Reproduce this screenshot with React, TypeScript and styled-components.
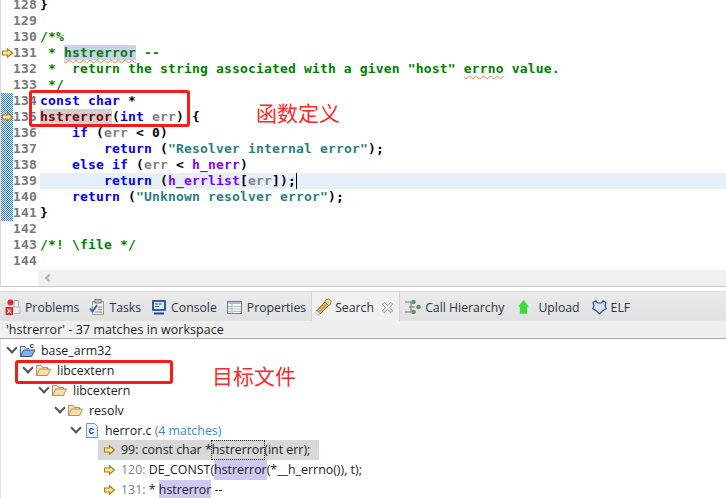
import React from 'react';
import styled, { createGlobalStyle } from 'styled-components';

const GlobalStyle = createGlobalStyle`
    html, body {
        margin: 0;
        padding: 0;
        background: #fff;
    }
`;

type Kind = 'plain' | 'kw' | 'cm' | 'str' | 'param' | 'glob' | 'def' | 'occ' | 'squig';
type Tok = [Kind, string];

const kindColor: Record<Kind, string> = {
    plain: '#000',
    kw: '#0000f0',
    cm: '#008000',
    str: '#2a7f7f',
    param: '#808080',
    glob: '#7f00ff',
    def: '#7f0000',
    occ: '#008000',
    squig: '#008000',
};

const codeLines: { n: number; toks: Tok[]; mark?: boolean; current?: boolean }[] = [
    { n: 128, toks: [['plain', '}']] },
    { n: 129, toks: [] },
    { n: 130, toks: [['cm', '/*%']] },
    { n: 131, mark: true, toks: [['cm', ' * '], ['occ', 'hstrerror'], ['cm', ' --']] },
    { n: 132, toks: [['cm', ' *  return the string associated with a given "host" '], ['squig', 'errno'], ['cm', ' value.']] },
    { n: 133, toks: [['cm', ' */']] },
    { n: 134, toks: [['kw', 'const'], ['plain', ' '], ['kw', 'char'], ['plain', ' *']] },
    { n: 135, mark: true, toks: [['def', 'hstrerror'], ['plain', '('], ['kw', 'int'], ['plain', ' '], ['param', 'err'], ['plain', ') {']] },
    { n: 136, toks: [['plain', '    '], ['kw', 'if'], ['plain', ' ('], ['param', 'err'], ['plain', ' < 0)']] },
    { n: 137, toks: [['plain', '        '], ['kw', 'return'], ['plain', ' ('], ['str', '"Resolver internal error"'], ['plain', ');']] },
    { n: 138, toks: [['plain', '    '], ['kw', 'else'], ['plain', ' '], ['kw', 'if'], ['plain', ' ('], ['param', 'err'], ['plain', ' < '], ['glob', 'h_nerr'], ['plain', ')']] },
    { n: 139, current: true, toks: [['plain', '        '], ['kw', 'return'], ['plain', ' ('], ['glob', 'h_errlist'], ['plain', '['], ['param', 'err'], ['plain', ']);']] },
    { n: 140, toks: [['plain', '    '], ['kw', 'return'], ['plain', ' ('], ['str', '"Unknown resolver error"'], ['plain', ');']] },
    { n: 141, toks: [['plain', '}']] },
    { n: 142, toks: [] },
    { n: 143, toks: [['cm', '/*! \\file */']] },
    { n: 144, toks: [] },
];

const hatch =
    "url(\"data:image/svg+xml,%3Csvg xmlns='http://www.w3.org/2000/svg' width='2' height='2' shape-rendering='crispEdges'%3E%3Crect width='2' height='2' fill='%23fff'/%3E%3Crect width='1' height='1' fill='%231878e8'/%3E%3Crect x='1' y='1' width='1' height='1' fill='%231878e8'/%3E%3C/svg%3E\")";

const ArrowMark = () => (
    <svg width="11" height="10" viewBox="0 0 11 10">
        <path d="M0.5 3H5.5V0.8L10.3 5L5.5 9.2V7H0.5Z" fill="#fdeaa0" stroke="#b07c12" strokeWidth="1.2" />
    </svg>
);

const ProblemsIcon = () => (
    <svg width="16" height="18" viewBox="0 0 16 18">
        <path d="M9 2.5H13.5V13H9Z" fill="#f4f6fa" stroke="#9aa4b4" />
        <path d="M9 9H15V15.5H9" fill="#e8ecf4" stroke="#b0b8c8" />
        <circle cx="5.5" cy="4.5" r="3" fill="#e02c2c" />
        <rect x="0.5" y="9" width="7.5" height="8" fill="#d03434" />
        <path d="M2.5 11L6 15M6 11L2.5 15" stroke="#fff" strokeWidth="1.1" />
    </svg>
);

const TasksIcon = () => (
    <svg width="16" height="16" viewBox="0 0 16 16">
        <rect x="3.5" y="2.5" width="11" height="13" fill="#f6f0e2" stroke="#ab9a76" />
        <rect x="6" y="0.5" width="6" height="3.5" fill="#c0c2d0" stroke="#7c7e90" />
        <path d="M1 9.5L3.6 12.5L8 6" fill="none" stroke="#1c5ed0" strokeWidth="1.8" />
        <path d="M9 8H13M9 10.5H13M6 13H13" stroke="#6b8fc4" />
    </svg>
);

const ConsoleIcon = () => (
    <svg width="16" height="16" viewBox="0 0 16 16">
        <rect x="1" y="1" width="14" height="11" rx="1" fill="#2c5e9e" />
        <rect x="3" y="3" width="10" height="7" fill="#e4edf8" />
        <path d="M4 5H11M4 7.5H8" stroke="#2c5e9e" />
        <path d="M3 14.5H13" stroke="#1f4880" strokeWidth="2" />
    </svg>
);

const PropertiesIcon = () => (
    <svg width="16" height="15" viewBox="0 0 16 15">
        <rect x="0.5" y="1.5" width="14" height="12" fill="#f8f8f8" stroke="#6c7f92" />
        <rect x="1" y="2" width="13" height="2" fill="#aebfd0" />
        <path d="M5 4V13M1 6.5H14M1 9H14M1 11.5H14" stroke="#b4c0cc" />
    </svg>
);

const SearchIcon = () => (
    <svg width="17" height="18" viewBox="0 0 17 18">
        <path d="M1.5 13L10 4L13.5 7.5L5 16Z" fill="#d8a860" stroke="#8a6a3a" />
        <path d="M1.5 13L5 16L3 17L0.5 15Z" fill="#fffdf0" stroke="#c8bc98" />
        <path d="M10 2.5L13.5 0.8L16.3 3.5L14.8 7.2L13.5 7.5L10 4Z" fill="#f1d98a" stroke="#98824e" />
    </svg>
);

const CloseIcon = () => (
    <svg width="11" height="11" viewBox="0 0 11 11">
        <path d="M0.5 2L2 0.5L5.5 3.5L9 0.5L10.5 2L7.5 5.5L10.5 9L9 10.5L5.5 7.5L2 10.5L0.5 9L3.5 5.5Z" fill="#fff" stroke="#8a8a8a" />
    </svg>
);

const HierarchyIcon = () => (
    <svg width="16" height="16" viewBox="0 0 16 16">
        <path d="M0 3H6M0 13H6M4 8H10M6 3V13" stroke="#777" fill="none" />
        <circle cx="8.5" cy="3" r="2.3" fill="#549a5c" />
        <circle cx="13.5" cy="8" r="2.3" fill="#549a5c" />
        <circle cx="8.5" cy="13" r="2.3" fill="#549a5c" />
    </svg>
);

const UploadIcon = () => (
    <svg width="20" height="14" viewBox="-4 0 20 14">
        <path d="M5.5 0L10.5 6.5H9V13.5H2V6.5H0.5Z" fill="#38dc3c" stroke="#5ccc5c" strokeWidth="0.4" />
    </svg>
);

const ElfIcon = () => (
    <svg width="17" height="15" viewBox="-2 0 17 15">
        <path d="M1 2.5L4 0.8L5.5 3H9.5L11 0.8L14 2.5L13 6L14.3 8.5L10.5 11L7.5 14L4.5 11L0.7 8.5L2 6Z" fill="#d9e2f2" stroke="#2e4f8f" strokeWidth="1.2" />
    </svg>
);

const FolderIcon = () => (
    <svg width="16" height="14" viewBox="0 0 16 14">
        <path d="M1.5 12.5V2.5H6L7.5 4.5H12.5V6" fill="#f5e6c4" stroke="#b28f5a" />
        <path d="M1.5 12.5L4.5 6H15.5L12.5 12.5Z" fill="#f8dfa8" stroke="#b28f5a" />
    </svg>
);

const ProjectIcon = () => (
    <svg width="17" height="16" viewBox="0 0 17 16">
        <path d="M1.5 14.5V4.5H6L7.5 6.5H10" fill="#dce8f6" stroke="#3a5f98" />
        <path d="M1.5 14.5L4.5 8H16L12.5 14.5Z" fill="#7fb0e6" stroke="#2f568f" />
        <text x="10.5" y="6" fontFamily="Liberation Sans, sans-serif" fontSize="8" fontWeight="700" fill="#2a3a60">c</text>
    </svg>
);

const CFileIcon = () => (
    <svg width="12" height="15" viewBox="0 0 12 15">
        <path d="M0.5 0.5H8.5L11.5 3.5V14.5H0.5Z" fill="#eef4fb" stroke="#7f93ac" />
        <text x="2.5" y="11" fontFamily="Liberation Sans, sans-serif" fontSize="10" fontWeight="700" fill="#1e5aa8">c</text>
    </svg>
);

const tabs = [
    { label: 'Problems', icon: <ProblemsIcon /> },
    { label: 'Tasks', icon: <TasksIcon /> },
    { label: 'Console', icon: <ConsoleIcon /> },
    { label: 'Properties', icon: <PropertiesIcon /> },
];

const tabsAfter = [
    { label: 'Call Hierarchy', icon: <HierarchyIcon /> },
    { label: 'Upload', icon: <UploadIcon /> },
    { label: 'ELF', icon: <ElfIcon /> },
];

const App = () => {
    return (
        <Page>
            <GlobalStyle />
            <Editor>
                <CodeArea>
                    {codeLines.map((line) => (
                        <CodeRow key={line.n}>
                            <Overview $changed={line.n >= 134 && line.n <= 141}>
                                {line.mark && <ArrowMark />}
                            </Overview>
                            <LineNumber>{line.n}</LineNumber>
                            <CodeText $current={line.current}>
                                {line.toks.map(([kind, text], i) => (
                                    <Token key={i} $kind={kind}>{text}</Token>
                                ))}
                                {line.current && <Caret />}
                            </CodeText>
                        </CodeRow>
                    ))}
                </CodeArea>
                <HScroll>
                    <ScrollArrow />
                </HScroll>
            </Editor>

            <Panel>
                <TabBar>
                    {tabs.map((t) => (
                        <Tab key={t.label}>{t.icon}{t.label}</Tab>
                    ))}
                    <ActiveTab>
                        <SearchIcon />Search<CloseSlot><CloseIcon /></CloseSlot>
                    </ActiveTab>
                    {tabsAfter.map((t) => (
                        <Tab key={t.label}>{t.icon}{t.label}</Tab>
                    ))}
                </TabBar>
                <StatusRow>'hstrerror' - 37 matches in workspace</StatusRow>
                <Tree>
                    <TreeRow $level={0}><Chevron /><IconSlot><ProjectIcon /></IconSlot><span>base_arm32</span></TreeRow>
                    <TreeRow $level={1}><Chevron /><IconSlot><FolderIcon /></IconSlot><span>libcextern</span></TreeRow>
                    <TreeRow $level={2}><Chevron /><IconSlot><FolderIcon /></IconSlot><span>libcextern</span></TreeRow>
                    <TreeRow $level={3}><Chevron /><IconSlot><FolderIcon /></IconSlot><span>resolv</span></TreeRow>
                    <TreeRow $level={4}>
                        <Chevron /><IconSlot $inset={3}><CFileIcon /></IconSlot>
                        <span>herror.c <MatchCount>(4 matches)</MatchCount></span>
                    </TreeRow>
                    <MatchRow $selected>
                        <ArrowMark />
                        <span><MatchLine $selected>99:</MatchLine> const char *<FocusWord>hstrerror</FocusWord>(int err);</span>
                    </MatchRow>
                    <MatchRow>
                        <ArrowMark />
                        <span><MatchLine>120:</MatchLine> DE_CONST(<Hit>hstrerror</Hit>(*__h_errno()), t);</span>
                    </MatchRow>
                    <MatchRow>
                        <ArrowMark />
                        <span><MatchLine>131:</MatchLine> * <Hit>hstrerror</Hit> --</span>
                    </MatchRow>
                </Tree>
            </Panel>

            <DefinitionBox />
            <DefinitionLabel>函数定义</DefinitionLabel>
            <TargetBox />
            <TargetLabel>目标文件</TargetLabel>
        </Page>
    );
};

export default App;

const Page = styled.div`
    position: relative;
    width: 726px;
    height: 498px;
    overflow: hidden;
    background: #fff;
`;

const Editor = styled.div`
    height: 287px;
    border-left: 1px solid #d8d8d8;
    border-bottom: 1px solid #c8c8c8;
    box-sizing: border-box;
    display: flex;
    flex-direction: column;
    overflow: hidden;
`;

const CodeArea = styled.div`
    height: 270px;
    flex: none;
    margin-top: -3px;
    padding-bottom: 3px;
    box-sizing: content-box;
`;

const CodeRow = styled.div`
    display: flex;
    height: 16px;
    font: 700 13px/16px 'DejaVu Sans Mono', 'Liberation Mono', monospace;
    letter-spacing: 0.17px;
    white-space: pre;
`;

const Overview = styled.div<{ $changed?: boolean }>`
    width: 12px;
    flex: none;
    display: flex;
    align-items: center;
    justify-content: center;
    background: ${(p) => (p.$changed ? `${hatch} 0 0 / 2px 2px` : '#fff')};
`;

const LineNumber = styled.div`
    width: 25px;
    flex: none;
    padding-right: 1px;
    box-sizing: border-box;
    text-align: right;
    color: #787878;
    background: #fff;
`;

const CodeText = styled.div<{ $current?: boolean }>`
    flex: 1;
    margin-left: 2px;
    background: ${(p) => (p.$current ? '#e6f0fb' : 'transparent')};
`;

const Token = styled.span<{ $kind: Kind }>`
    color: ${(p) => kindColor[p.$kind]};
    background: ${(p) => (p.$kind === 'def' ? '#d0d0d0' : p.$kind === 'occ' ? '#cfcdf0' : 'transparent')};
    ${(p) => (p.$kind === 'occ' || p.$kind === 'squig'
        ? 'text-decoration: underline wavy #f08050 1px; text-underline-offset: 2px;'
        : '')}
`;

const Caret = styled.span`
    display: inline-block;
    width: 1px;
    height: 16px;
    vertical-align: top;
    background: #000;
`;

const HScroll = styled.div`
    height: 16px;
    flex: none;
    margin-left: 37px;
    background: #f0f0f0;
    display: flex;
    align-items: center;
    padding-left: 7px;
`;

const ScrollArrow = styled.span`
    width: 4px;
    height: 4px;
    margin-left: 1px;
    border-left: 2px solid #b4b4b4;
    border-bottom: 2px solid #b4b4b4;
    transform: rotate(45deg);
`;

const Panel = styled.div`
    margin-top: 4px;
    font-family: 'Open Sans', 'Noto Sans', sans-serif;
    font-size: 12.4px;
    color: #1c1c1c;
`;

const TabBar = styled.div`
    display: flex;
    align-items: stretch;
    height: 30px;
    padding-left: 5px;
    border-top: 1px solid #dcdcdc;
    box-sizing: border-box;
    font-size: 12.25px;
    background: linear-gradient(#ebebeb, #e0e0e0);
`;

const Tab = styled.div`
    display: flex;
    align-items: center;
    gap: 4px;
    margin-right: 10px;
    padding-top: 1px;
    color: #23364a;
    white-space: nowrap;
`;

const ActiveTab = styled(Tab)`
    background: #f0f0f0;
    gap: 3px;
    padding: 1px 0 0 3px;
    margin: 0 5px 0 -5px;
    width: 89px;
    box-sizing: border-box;
    border-right: 1px solid #d4d4d4;
    border-left: 1px solid #d4d4d4;
`;

const CloseSlot = styled.span`
    display: flex;
    margin-left: 5px;
`;

const StatusRow = styled.div`
    height: 18px;
    line-height: 17px;
    padding-left: 6px;
    letter-spacing: 0.1px;
    background: #efefef;
    border-bottom: 1px solid #a8a8a8;
    box-sizing: border-box;
`;

const Tree = styled.div`
    padding-top: 1px;
    border-left: 1px solid #e4e4e4;
`;

const TreeRow = styled.div<{ $level: number }>`
    display: flex;
    align-items: center;
    height: 20px;
    padding-left: ${(p) => 3 + p.$level * 16}px;
    white-space: nowrap;
`;

const Chevron = styled.span`
    width: 6px;
    height: 6px;
    margin: -4px 3px 0 4px;
    border-right: 2px solid #555;
    border-bottom: 2px solid #555;
    transform: rotate(45deg);
    flex: none;
    box-sizing: content-box;
`;

const IconSlot = styled.span<{ $inset?: number }>`
    display: flex;
    flex: none;
    width: 22px;
    padding-left: ${(p) => p.$inset ?? 0}px;
    box-sizing: border-box;
`;

const MatchCount = styled.span`
    color: #3a8ac0;
`;

const MatchRow = styled.div<{ $selected?: boolean }>`
    display: flex;
    align-items: center;
    gap: 6px;
    width: fit-content;
    min-width: 221px;
    height: 20px;
    margin-left: 97px;
    padding: 0 4px 0 6px;
    box-sizing: border-box;
    white-space: nowrap;
    background: ${(p) => (p.$selected ? '#d8d8d8' : 'transparent')};
`;

const MatchLine = styled.span<{ $selected?: boolean }>`
    color: ${(p) => (p.$selected ? '#1c1c1c' : '#808080')};
`;

const Hit = styled.span`
    background: #cdc9f2;
    display: inline-block;
    line-height: 20px;
`;

const FocusWord = styled.span`
    outline: 1px dotted #222;
    display: inline-block;
    line-height: 18px;
`;

const DefinitionBox = styled.div`
    position: absolute;
    left: 29px;
    top: 90px;
    width: 161px;
    height: 37px;
    box-sizing: border-box;
    border: 3px solid #fb1a1a;
    border-radius: 3px;
`;

const TargetBox = styled.div`
    position: absolute;
    left: 15px;
    top: 360px;
    width: 158px;
    height: 24px;
    box-sizing: border-box;
    border: 3px solid #fb1a1a;
    border-radius: 3px;
`;

const DefinitionLabel = styled.div`
    position: absolute;
    left: 256px;
    top: 99px;
    font: 400 21px/26px 'Noto Sans CJK SC', sans-serif;
    color: #fb2a2a;
`;

const TargetLabel = styled(DefinitionLabel)`
    left: 212px;
    top: 362px;
`;
